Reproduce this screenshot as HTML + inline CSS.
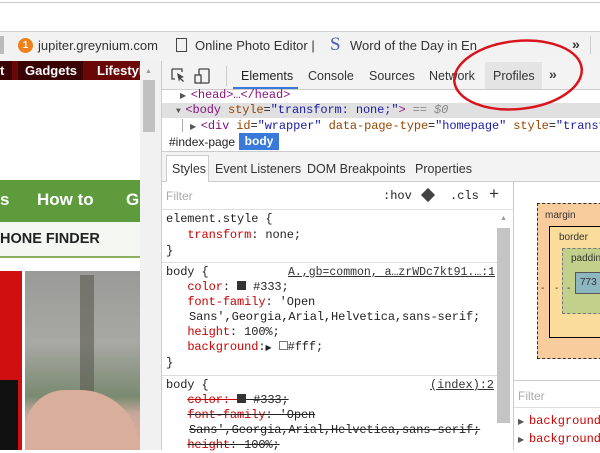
<!DOCTYPE html>
<html><head><style>
*{margin:0;padding:0;box-sizing:border-box}
body{width:600px;height:450px;overflow:hidden;background:#fff;font-family:"Liberation Sans",sans-serif;position:relative}
.a{position:absolute}
.m{font-family:"Liberation Mono",monospace;font-size:11px;white-space:pre;color:#222}
.s{font-size:12px;letter-spacing:-0.1px}
.r{color:#c80000}.t{color:#881280}.at{color:#994500}.v{color:#1a1aa6}
.tab{font-size:12.5px;color:#333}
.in{display:inline-block;padding-left:23px}
</style></head><body>
<div class="a" style="left:0;top:2px;width:600px;height:1px;background:#ccc"></div>
<div class="a" style="left:0;top:31px;width:600px;height:30px;background:#f2f2f2;border-top:1px solid #cfcfcf"></div>
<div class="a" style="left:0;top:36px;width:4px;height:18px;background:#bbb"></div>
<div class="a" style="left:18px;top:38px;width:15px;height:15px;border-radius:50%;background:#f07f1e;color:#fff;font-size:10px;font-weight:bold;text-align:center;line-height:15px">1</div>
<div class="a tab" style="left:38px;top:38px;font-size:13px">jupiter.greynium.com</div>
<div class="a" style="left:176px;top:38px;width:11px;height:14px;border:1px solid #444"></div>
<div class="a tab" style="left:195px;top:38px;font-size:13px">Online Photo Editor |</div>
<div class="a" style="left:330px;top:34px;font-family:'Liberation Serif',serif;font-size:19px;color:#4a5fb0">S</div>
<div class="a tab" style="left:350px;top:38px;font-size:13px">Word of the Day in En</div>
<div class="a" style="left:572px;top:36px;font-size:14px;font-weight:bold;color:#333">»</div>
<div class="a" style="left:590px;top:36px;width:1px;height:18px;background:#ccc"></div>
<!-- left page -->
<div class="a" style="left:0;top:61px;width:140px;height:19px;background:#6a0808"></div>
<div class="a" style="left:0;top:61px;width:12px;height:19px;background:#3a0303"></div>
<div class="a" style="left:18px;top:61px;width:65px;height:19px;background:#3a0303"></div>
<div class="a" style="left:0;top:63px;color:#fff;font-weight:bold;font-size:13px">t</div>
<div class="a" style="left:25px;top:63px;color:#fff;font-weight:bold;font-size:13px">Gadgets</div>
<div class="a" style="left:97px;top:63px;color:#fff;font-weight:bold;font-size:13px;white-space:nowrap;width:43px;overflow:hidden">Lifestyle</div>
<div class="a" style="left:140px;top:61px;width:21px;height:389px;background:#f1f1f1"></div>
<div class="a" style="left:143px;top:80px;width:12px;height:52px;background:#c1c1c1"></div>
<div class="a" style="left:145px;top:68px;font-size:7px;color:#999">▲</div>
<div class="a" style="left:0;top:180px;width:140px;height:42px;background:#5e9b3d"></div>
<div class="a" style="left:0;top:190px;color:#fff;font-weight:bold;font-size:17px">s</div>
<div class="a" style="left:37px;top:190px;color:#fff;font-weight:bold;font-size:17px">How to</div>
<div class="a" style="left:126px;top:190px;color:#fff;font-weight:bold;font-size:17px">G</div>
<div class="a" style="left:0;top:222px;width:140px;height:36px;background:#f3f6f1;border-bottom:2px solid #8cb060"></div>
<div class="a" style="left:0;top:231px;font-weight:bold;font-size:14.5px;color:#222">HONE FINDER</div>
<div class="a" style="left:0;top:271px;width:22px;height:179px;background:#d01010"></div>
<div class="a" style="left:0;top:380px;width:18px;height:70px;background:#111"></div>
<div class="a" style="left:25px;top:271px;width:115px;height:179px;background:linear-gradient(180deg,#9a9a98 0%,#a8a8a4 40%,#7a8a70 70%,#c8a89a 80%,#d8b0a0 100%)"></div>
<div class="a" style="left:80px;top:275px;width:14px;height:120px;background:#5a5a50;opacity:.6"></div>
<div class="a" style="left:25px;top:390px;width:115px;height:60px;border-radius:40px 60px 0 0;background:#d9ae9c"></div>
<!-- devtools -->
<div class="a" style="left:161px;top:61px;width:439px;height:389px;background:#fff;border-left:1px solid #ccc"></div>
<div class="a" style="left:162px;top:61px;width:438px;height:29px;background:#f3f3f3;border-bottom:1px solid #ccc"></div>
<svg class="a" style="left:170px;top:67px" width="50" height="18"><path d="M2 2h10v3M2 2v10h3" fill="none" stroke="#444" stroke-width="1.3"/><path d="M7 6l7 4-3 1 3 3-1 1-3-3-1 3z" fill="#444"/><rect x="29" y="2" width="10" height="14" rx="1" fill="none" stroke="#444" stroke-width="1.3"/><rect x="25" y="8" width="6" height="8" fill="#f3f3f3" stroke="#444" stroke-width="1.3"/></svg>
<div class="a" style="left:226px;top:66px;width:1px;height:20px;background:#ccc"></div>
<div class="a tab" style="left:241px;top:69px;color:#222">Elements</div>
<div class="a" style="left:233px;top:87px;width:65px;height:2px;background:#3879d9"></div>
<div class="a tab" style="left:308px;top:69px">Console</div>
<div class="a tab" style="left:369px;top:69px">Sources</div>
<div class="a tab" style="left:429px;top:69px">Network</div>
<div class="a" style="left:485px;top:62px;width:57px;height:27px;background:#e4e4e4"></div>
<div class="a tab" style="left:493px;top:69px">Profiles</div>
<div class="a" style="left:549px;top:66px;font-size:14px;font-weight:bold;color:#444">»</div>
<div class="a m s" style="left:180px;top:88px"><span style="font-size:8px;color:#555">▶ </span><span class="t">&lt;head&gt;…&lt;/head&gt;</span></div>
<div class="a" style="left:162px;top:103px;width:438px;height:15px;background:#e0e0e0"></div>
<div class="a m s" style="left:176px;top:103px"><span style="font-size:8px;color:#555">▼ </span><span class="t">&lt;body </span><span class="at">style</span>=<span class="v">"transform: none;"</span><span class="t">&gt;</span> <i style="color:#888">== $0</i></div>
<div class="a" style="left:182px;top:119px;width:1px;height:13px;background:#aaa"></div>
<div class="a m s" style="left:190px;top:119px"><span style="font-size:8px;color:#555">▶ </span><span class="t">&lt;div </span><span class="at">id</span>=<span class="v">"wrapper"</span> <span class="at">data-page-type</span>=<span class="v">"homepage"</span> <span class="at">style</span>=<span class="v">"transform</span></div>
<div class="a" style="left:169px;top:135px;font-size:12px;color:#222">#index-page</div>
<div class="a" style="left:239px;top:133px;width:40px;height:17px;background:#3879d9;color:#fff;font-size:12px;font-weight:bold;text-align:center;line-height:17px">body</div>
<div class="a" style="left:162px;top:151px;width:438px;height:31px;background:#f3f3f3;border-top:1px solid #ccc;border-bottom:1px solid #ccc"></div>
<div class="a" style="left:166px;top:155px;width:43px;height:27px;background:#fff;border:1px solid #ccc;border-bottom:none"></div>
<div class="a tab" style="left:172px;top:162px">Styles</div>
<div class="a tab" style="left:215px;top:162px">Event Listeners</div>
<div class="a tab" style="left:307px;top:162px">DOM Breakpoints</div>
<div class="a tab" style="left:415px;top:162px">Properties</div>
<div class="a" style="left:166px;top:189px;font-size:12px;color:#aaa">Filter</div>
<div class="a m" style="left:383px;top:189px;font-size:12px">:hov</div>
<div class="a" style="left:423px;top:190px;width:10px;height:10px;background:#444;transform:rotate(45deg)"></div>
<div class="a m" style="left:450px;top:189px;font-size:12px">.cls</div>
<div class="a" style="left:489px;top:184px;font-size:17px;color:#333">+</div>
<div class="a" style="left:162px;top:209px;width:351px;height:1px;background:#ddd"></div>
<div class="a" style="left:497px;top:228px;width:13px;height:195px;background:#c4c4c4"></div>
<div class="a" style="left:500px;top:215px;font-size:7px;color:#999">▲</div>
<div class="a" style="left:513px;top:182px;width:1px;height:268px;background:#ccc"></div>
<div class="a m s" style="left:166px;top:211px;line-height:16px">element.style {
   <span class="r">transform</span>: none;
}</div>
<div class="a" style="left:162px;top:262px;width:335px;height:1px;background:#ddd"></div>
<div class="a m s" style="left:166px;top:265px;line-height:15px">body {
   <span class="r">color</span>: <span style="display:inline-block;width:9px;height:9px;background:#333"></span> #333;
   <span class="r">font-family</span>: 'Open
<span class="in">Sans',Georgia,Arial,Helvetica,sans-serif;</span>
   <span class="r">height</span>: 100%;
   <span class="r">background</span>:<span style="font-size:8px">▶</span> <span style="display:inline-block;width:9px;height:9px;border:1px solid #777"></span>#fff;
}</div>
<div class="a m" style="left:288px;top:266px;text-decoration:underline;color:#333;font-size:11.5px">A.,gb=common, a…zrWDc7kt91.…:1</div>
<div class="a" style="left:162px;top:375px;width:335px;height:1px;background:#ddd"></div>
<div class="a m s" style="left:166px;top:378px;line-height:15px">body {
   <s class="r">color: </s><s><span style="display:inline-block;width:9px;height:9px;background:#333"></span> #333;</s>
   <s><span class="r">font-family</span>: 'Open</s>
<span class="in"><s>Sans',Georgia,Arial,Helvetica,sans-serif;</s></span>
   <s><span class="r">height</span>: 100%;</s></div>
<div class="a m s" style="left:430px;top:378px;text-decoration:underline;color:#333">(index):2</div>
<!-- box model -->
<div class="a" style="left:537px;top:203px;width:70px;height:156px;background:#f9cc9d;border:1px dashed #333"></div>
<div class="a" style="left:545px;top:210px;font-size:10px;color:#333">margin</div>
<div class="a" style="left:549px;top:226px;width:60px;height:112px;background:#fbdd9b;border:1px solid #000"></div>
<div class="a" style="left:559px;top:232px;font-size:10px;color:#333">border</div>
<div class="a" style="left:562px;top:248px;width:50px;height:66px;background:#c3d08b;border:1px dashed #777"></div>
<div class="a" style="left:571px;top:253px;font-size:10px;color:#333">padding</div>
<div class="a" style="left:575px;top:272px;width:30px;height:22px;background:#8cb6c0;border:1px solid #555"></div>
<div class="a" style="left:580px;top:277px;font-size:10px;color:#333">773</div>
<div class="a" style="left:541px;top:283px;font-size:10px;color:#333">-</div>
<div class="a" style="left:555px;top:283px;font-size:10px;color:#333">-</div>
<div class="a" style="left:567px;top:283px;font-size:10px;color:#333">-</div>
<div class="a" style="left:514px;top:380px;width:86px;height:1px;background:#ccc"></div>
<div class="a" style="left:518px;top:389px;font-size:12px;color:#aaa">Filter</div>
<div class="a" style="left:514px;top:407px;width:86px;height:1px;background:#ddd"></div>
<div class="a m" style="left:518px;top:413px;font-size:12px;line-height:17px;color:#c80000"><span style="font-size:8px;color:#555">▶ </span>background
<span style="font-size:8px;color:#555">▶ </span>background</div>
<!-- red ellipse -->
<svg class="a" style="left:440px;top:35px" width="160" height="80"><ellipse cx="78" cy="40" rx="64" ry="34" transform="rotate(-6 78 40)" fill="none" stroke="#d8141c" stroke-width="2.5"/></svg>
</body></html>
